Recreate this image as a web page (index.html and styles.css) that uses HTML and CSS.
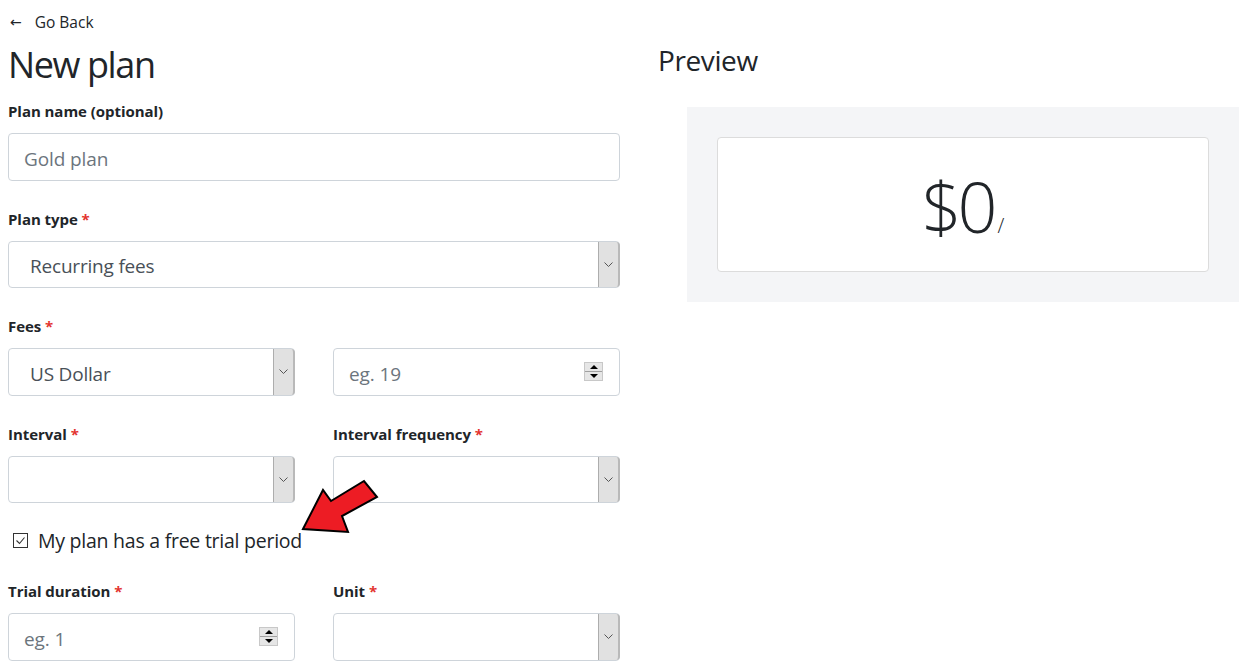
FILE: index.html
```html
<!DOCTYPE html>
<html lang="en">
<head>
<meta charset="utf-8">
<title>New plan</title>
<link rel="stylesheet" href="styles.css">
</head>
<body>
<div class="page">
  <div class="left">
    <a class="back" href="#"><span class="back-arrow">&larr;</span>Go Back</a>
    <h1 class="title">New plan</h1>

    <div class="field">
      <label class="label">Plan name (optional)</label>
      <div class="control"><input class="control-input" type="text" placeholder="Gold plan"></div>
    </div>

    <div class="field">
      <label class="label">Plan type <span class="req">*</span></label>
      <div class="control select"><span class="select-value">Recurring fees</span><span class="select-btn"><svg width="9" height="5" viewBox="0 0 9 5"><path d="M0.5 0.5 L4.5 4.5 L8.5 0.5" fill="none" stroke="#555" stroke-width="1"/></svg></span></div>
    </div>

    <div class="field">
      <label class="label">Fees <span class="req">*</span></label>
      <div class="row">
        <div class="control select"><span class="select-value">US Dollar</span><span class="select-btn"><svg width="9" height="5" viewBox="0 0 9 5"><path d="M0.5 0.5 L4.5 4.5 L8.5 0.5" fill="none" stroke="#555" stroke-width="1"/></svg></span></div>
        <div class="control number"><input class="control-input" type="text" placeholder="eg. 19"><span class="spin"><span class="spin-up"></span><span class="spin-down"></span></span></div>
      </div>
    </div>

    <div class="field">
      <div class="row">
        <label class="label">Interval <span class="req">*</span></label>
        <label class="label">Interval frequency <span class="req">*</span></label>
      </div>
      <div class="row">
        <div class="control select"><span class="select-value"></span><span class="select-btn"><svg width="9" height="5" viewBox="0 0 9 5"><path d="M0.5 0.5 L4.5 4.5 L8.5 0.5" fill="none" stroke="#555" stroke-width="1"/></svg></span></div>
        <div class="control select"><span class="select-value"></span><span class="select-btn"><svg width="9" height="5" viewBox="0 0 9 5"><path d="M0.5 0.5 L4.5 4.5 L8.5 0.5" fill="none" stroke="#555" stroke-width="1"/></svg></span></div>
      </div>
    </div>

    <div class="check-row">
      <span class="checkbox"><svg width="13" height="13" viewBox="0 0 13 13"><path d="M2.5 6.5 L5.5 9.5 L10.5 3.5" fill="none" stroke="#333" stroke-width="1.1"/></svg></span>
      <span class="check-text">My plan has a free trial period</span>
    </div>

    <div class="field">
      <div class="row">
        <label class="label">Trial duration <span class="req">*</span></label>
        <label class="label">Unit <span class="req">*</span></label>
      </div>
      <div class="row">
        <div class="control number"><input class="control-input" type="text" placeholder="eg. 1"><span class="spin"><span class="spin-up"></span><span class="spin-down"></span></span></div>
        <div class="control select"><span class="select-value"></span><span class="select-btn"><svg width="9" height="5" viewBox="0 0 9 5"><path d="M0.5 0.5 L4.5 4.5 L8.5 0.5" fill="none" stroke="#555" stroke-width="1"/></svg></span></div>
      </div>
    </div>

    <svg class="callout" width="82" height="58" viewBox="300 478 82 58">
      <polygon points="303,529 323,490 331,501 364,481 377,497 342,516 348,532" fill="#ed1c24" stroke="#000" stroke-width="2" stroke-linejoin="miter"/>
    </svg>
  </div>

  <div class="right">
    <h2 class="preview-title">Preview</h2>
    <div class="preview-box">
      <div class="price-card">
        <span class="price">$0</span><span class="per">/</span>
      </div>
    </div>
  </div>
</div>
</body>
</html>
```

FILE: styles.css
```css
* { box-sizing: border-box; }

body {
  margin: 0;
  font-family: "Open Sans", "Noto Sans", sans-serif;
  color: #212529;
  background: #fff;
}

.page {
  display: grid;
  grid-template-columns: 612px 1fr;
  column-gap: 36px;
  padding: 0 8px;
}

.left {
  position: relative;
  padding-top: 10px;
}

.back {
  display: flex;
  align-items: center;
  height: 24px;
  font-size: 15.5px;
  color: #212529;
  text-decoration: none;
  letter-spacing: 0;
}

.back-arrow {
  font-size: 14px;
  margin: 0 13px 0 2px;
  font-family: "DejaVu Sans", sans-serif;
}

.title {
  margin: 9px 0 0;
  font-size: 36px;
  font-weight: 400;
  line-height: 43px;
  letter-spacing: -1.4px;
}

.field {
  margin-top: 14px;
}

.field + .field {
  margin-top: 27px;
}

.label {
  display: block;
  font-size: 15px;
  font-weight: 700;
  line-height: 22px;
  letter-spacing: -0.05px;
  margin-bottom: 11px;
}

.req {
  color: #e3342f;
}

.row {
  display: grid;
  grid-template-columns: 287px 287px;
  column-gap: 38px;
}

.control {
  display: flex;
  align-items: center;
  height: 47.5px;
  border: 1px solid #ced4da;
  border-radius: 4px;
  background: #fff;
}

.control-input {
  flex: 1;
  min-width: 0;
  height: 100%;
  border: 0;
  outline: 0;
  background: transparent;
  padding: 4px 15px 0;
  font-family: inherit;
  font-size: 19px;
  color: #495057;
  letter-spacing: -0.1px;
}

.control-input::placeholder {
  color: #6c757d;
}

.select {
  padding: 0;
}

.select-value {
  flex: 1;
  padding: 4px 21px 0;
  font-size: 19px;
  color: #495057;
  letter-spacing: -0.2px;
}

.select-btn {
  display: flex;
  align-items: center;
  justify-content: center;
  width: 22px;
  align-self: stretch;
  margin: 0 -1px 0 0;
  background: #e1e1e1;
  border-left: 1px solid #adadad;
  border-right: 2px solid #b9b9b9;
  border-top-right-radius: 4px;
  border-bottom-right-radius: 4px;
}

.number {
  padding-right: 16px;
}

.spin {
  display: flex;
  flex-direction: column;
  width: 19px;
  height: 19px;
  background: #e6e6e6;
  border: 1px solid #c8c8c8;
}

.spin-up,
.spin-down {
  flex: 1;
  display: flex;
  align-items: center;
  justify-content: center;
}

.spin-up {
  border-bottom: 1px solid #a0a0a0;
}

.spin-up::before {
  content: "";
  border-left: 4px solid transparent;
  border-right: 4px solid transparent;
  border-bottom: 4px solid #000;
}

.spin-down::before {
  content: "";
  border-left: 4px solid transparent;
  border-right: 4px solid transparent;
  border-top: 4px solid #000;
}

.check-row {
  display: flex;
  align-items: center;
  height: 30px;
  margin-top: 22px;
}

.checkbox {
  display: flex;
  align-items: center;
  justify-content: center;
  width: 15px;
  height: 15px;
  margin-left: 5px;
  margin-right: 10px;
  border: 1px solid #333;
  background: #fff;
}

.check-text {
  font-size: 19.5px;
  letter-spacing: -0.25px;
  color: #212529;
}

.check-row + .field {
  margin-top: 25px;
}

.callout {
  position: absolute;
  left: 292px;
  top: 478px;
}

.right {
  padding-top: 43px;
}

.preview-title {
  margin: 0 0 0 2px;
  font-size: 28px;
  font-weight: 400;
  line-height: 34px;
  letter-spacing: -0.4px;
}

.preview-box {
  margin: 30px 0 0 31px;
  padding: 30px;
  background: #f4f5f7;
}

.price-card {
  display: flex;
  align-items: baseline;
  justify-content: center;
  height: 135px;
  padding-top: 28px;
  background: #fff;
  border: 1px solid #dcdcdc;
  border-radius: 4px;
}

.price {
  font-size: 70px;
  font-weight: 300;
  line-height: 80px;
  letter-spacing: -4px;
  color: #212529;
}

.per {
  font-size: 20px;
  font-weight: 300;
  margin-left: 4px;
}
```
